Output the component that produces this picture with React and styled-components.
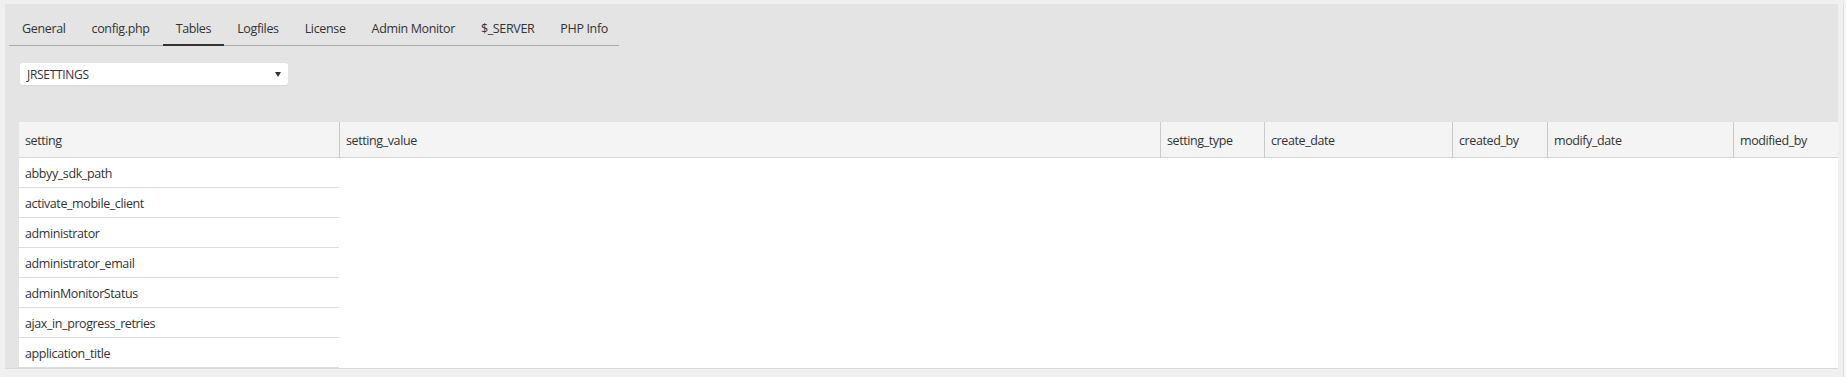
import React from "react";
import styled, { createGlobalStyle } from "styled-components";

const GlobalStyle = createGlobalStyle`
  html, body {
    margin: 0;
    padding: 0;
    background: #f0f0f0;
    font-family: 'Open Sans', 'Liberation Sans', sans-serif;
    color: #333;
  }
  * { box-sizing: border-box; }
`;

const Page = styled("div")`
  display: flex;
  height: 377px;
  padding-top: 4px;
  overflow: hidden;
`;

const Panel = styled("div")`
  flex: 1;
  min-width: 0;
  height: 365px;
  margin-left: 5px;
  background: #e4e4e4;
  border-bottom: 1px solid #dadada;
  display: flex;
  flex-direction: column;
  overflow: hidden;
`;

const Gutter = styled("div")`
  width: 8px;
  flex-shrink: 0;
  background: linear-gradient(to right, #f0f0f0 5px, #dcdcdc 5px, #dcdcdc 6px, #f7f7f7 6px);
`;

const TabBar = styled("div")`
  display: flex;
  width: 610px;
  margin-left: 4px;
  border-bottom: 1px solid #aaa;
`;

const Tab = styled("div")`
  position: relative;
  margin-bottom: -1px;
  padding: 15px 13px 5px;
  line-height: 20px;
  font-size: 12.5px;
  letter-spacing: -0.35px;
  color: #333;
  white-space: nowrap;
  border-bottom: 2px solid ${(p) => (p.$active ? "#333" : "transparent")};
  cursor: pointer;
`;

const Select = styled("div")`
  display: flex;
  align-items: center;
  justify-content: space-between;
  width: 268px;
  height: 23px;
  margin: 17px 0 0 15px;
  padding: 1px 7px 0 7px;
  background: #fff;
  border-radius: 3px;
  box-shadow: 0 1px 1px rgba(0, 0, 0, 0.06);
  font-size: 12px;
  letter-spacing: -0.3px;
  color: #3a2f3f;
`;

const Table = styled("table")`
  width: 1819px;
  margin: 37px 0 0 14px;
  table-layout: fixed;
  border-collapse: separate;
  border-spacing: 0;
  background: #fff;
  font-size: 12.5px;
  letter-spacing: -0.4px;
`;

const Th = styled("th")`
  height: 36px;
  padding: 1px 6px 0;
  text-align: left;
  font-weight: 400;
  color: #333;
  background: #f4f4f4;
  border-bottom: 1px solid #d6d6d6;
  border-left: ${(p) => (p.$first ? "none" : "1px solid #c9c9c9")};
  white-space: nowrap;
`;

const Td = styled("td")`
  height: 30px;
  padding: 1px 6px 0;
  color: #333;
  border-bottom: 1px solid #dcdcdc;
  white-space: nowrap;
`;

const columns = [
  ["setting", 320],
  ["setting_value", 821],
  ["setting_type", 104],
  ["create_date", 188],
  ["created_by", 95],
  ["modify_date", 186],
  ["modified_by", 105],
];

const tabs = ["General", "config.php", "Tables", "Logfiles", "License", "Admin Monitor", "$_SERVER", "PHP Info"];

const rows = [
  "abbyy_sdk_path",
  "activate_mobile_client",
  "administrator",
  "administrator_email",
  "adminMonitorStatus",
  "ajax_in_progress_retries",
  "application_title",
];

export default function App() {
  return (
    <>
      <GlobalStyle />
      <Page>
        <Panel>
          <TabBar>
            {tabs.map((t) => (
              <Tab key={t} $active={t === "Tables"}>{t}</Tab>
            ))}
          </TabBar>
          <Select>
            <span>JRSETTINGS</span>
            <svg width="6" height="5" viewBox="0 0 6 5">
              <path d="M0 0 H6 L3 5 Z" fill="#333" />
            </svg>
          </Select>
          <Table>
            <colgroup>
              {columns.map(([name, w]) => (
                <col key={name} style={{ width: w }} />
              ))}
            </colgroup>
            <thead>
              <tr>
                {columns.map(([name], i) => (
                  <Th key={name} $first={i === 0}>{name}</Th>
                ))}
              </tr>
            </thead>
            <tbody>
              {rows.map((r) => (
                <tr key={r}>
                  <Td>{r}</Td>
                </tr>
              ))}
            </tbody>
          </Table>
        </Panel>
        <Gutter />
      </Page>
    </>
  );
}
